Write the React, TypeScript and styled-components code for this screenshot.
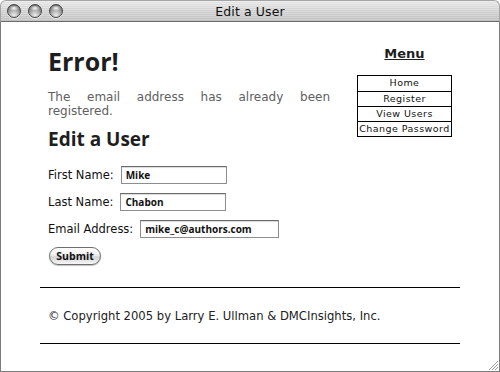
import React from 'react';
import styled, { createGlobalStyle } from 'styled-components';

const GlobalStyle = createGlobalStyle`
  html, body {
    margin: 0;
    padding: 0;
    background: #ffffff;
  }
  * {
    box-sizing: border-box;
  }
`;

const Window = styled.div`
  position: relative;
  width: 500px;
  height: 372px;
  display: flex;
  flex-direction: column;
  font-family: 'DejaVu Sans', Verdana, sans-serif;
`;

const TitleBar = styled.div`
  height: 22px;
  flex: none;
  display: grid;
  grid-template-columns: 1fr auto 1fr;
  align-items: center;
  border-radius: 6px 6px 0 0;
  border: 1px solid #a4a4a4;
  border-bottom-color: #6c6c6c;
  background:
    repeating-linear-gradient(180deg, rgba(255, 255, 255, 0.18) 0 1px, rgba(0, 0, 0, 0.03) 1px 2px),
    linear-gradient(180deg, #ececec 0%, #d6d6d6 50%, #c4c4c4 100%);
`;

const Lights = styled.div`
  display: flex;
  gap: 7px;
  padding-left: 6px;
`;

const Light = styled.span`
  width: 14px;
  height: 14px;
  border-radius: 50%;
  border: 1px solid #444;
  background:
    radial-gradient(ellipse 5px 3px at 50% 26%, rgba(255, 255, 255, 0.95) 0%, rgba(255, 255, 255, 0) 100%),
    radial-gradient(circle at 50% 85%, #eeeeee 0%, #a8a8a8 45%, #505050 100%);
  box-shadow: 0 1px 0 rgba(255, 255, 255, 0.6);
`;

const WindowTitle = styled.div`
  font-size: 12.5px;
  color: #111;
  letter-spacing: 0.1px;
`;

const Content = styled.div`
  flex: 1;
  border: 1px solid #7c7c7c;
  border-top: none;
  padding: 24px 0 0 0;
`;

const Columns = styled.div`
  display: flex;
  align-items: flex-start;
`;

const Main = styled.div`
  width: 282px;
  margin-left: 47px;
`;

const Heading = styled.h1`
  margin: 0;
  font-family: 'Open Sans', 'DejaVu Sans', sans-serif;
  font-size: 25px;
  line-height: 30px;
  font-weight: bold;
  color: #1e1e1e;
`;

const Message = styled.p`
  margin: 14px 0 0 0;
  font-size: 12px;
  line-height: 14px;
  color: #606060;
  text-align: justify;
`;

const SubHeading = styled.h2`
  margin: 10px 0 0 0;
  font-family: 'Open Sans', 'DejaVu Sans', sans-serif;
  font-size: 19px;
  line-height: 23px;
  font-weight: bold;
  color: #1e1e1e;
`;

const Form = styled.form`
  margin-top: 15px;
  display: flex;
  flex-direction: column;
  gap: 9px;
`;

const Row = styled.label`
  display: flex;
  align-items: center;
  gap: 7px;
  height: 18px;
  font-size: 11.5px;
  color: #111;
`;

const Field = styled.input<{ $w: number }>`
  width: ${({ $w }) => $w}px;
  height: 18px;
  padding: 0 4px;
  border: 1px solid #8e8e8e;
  border-top-color: #6a6a6a;
  box-shadow: inset 0 1px 1px rgba(0, 0, 0, 0.15);
  font-family: 'Open Sans', 'DejaVu Sans', sans-serif;
  font-size: 10px;
  font-weight: bold;
  line-height: 16px;
  color: #111;
  outline: none;
`;

const SubmitButton = styled.button`
  align-self: flex-start;
  margin-left: 1px;
  width: 52px;
  height: 18px;
  border-radius: 9px;
  border: 1px solid #6e6e6e;
  background: linear-gradient(180deg, #ffffff 0%, #f0f0f0 45%, #d4d4d4 55%, #f6f6f6 100%);
  box-shadow: 0 1px 1px rgba(0, 0, 0, 0.25);
  font-family: 'Open Sans', 'DejaVu Sans', sans-serif;
  font-size: 10.5px;
  font-weight: bold;
  color: #111;
  padding: 0;
`;

const Sidebar = styled.div`
  margin-left: auto;
  margin-right: 47px;
  width: 95px;
  display: flex;
  flex-direction: column;
  align-items: center;
`;

const MenuTitle = styled.div`
  font-size: 13px;
  line-height: 16px;
  font-weight: bold;
  text-decoration: underline;
  color: #1e1e1e;
`;

const MenuList = styled.ul`
  list-style: none;
  margin: 13px 0 0 0;
  padding: 0;
  width: 95px;
  border: 1px solid #000;
`;

const MenuItem = styled.li`
  height: 15px;
  line-height: 14px;
  text-align: center;
  font-size: 9.5px;
  letter-spacing: 0.45px;
  color: #111;
  white-space: nowrap;
  & + & {
    border-top: 1px solid #000;
  }
`;

const Footer = styled.div`
  margin: 22px 39px 0 39px;
  height: 57px;
  border-top: 1px solid #000;
  border-bottom: 1px solid #000;
  display: flex;
  align-items: center;
  padding-left: 8px;
  font-size: 11.6px;
  color: #222;
`;

const Grip = styled.svg`
  position: absolute;
  right: 1px;
  bottom: 1px;
`;

export default function App() {
  return (
    <>
      <GlobalStyle />
      <Window>
        <TitleBar>
          <Lights>
            <Light />
            <Light />
            <Light />
          </Lights>
          <WindowTitle>Edit a User</WindowTitle>
          <span />
        </TitleBar>
        <Content>
          <Columns>
            <Main>
              <Heading>Error!</Heading>
              <Message>The email address has already been registered.</Message>
              <SubHeading>Edit a User</SubHeading>
              <Form onSubmit={(e) => e.preventDefault()}>
                <Row>
                  First Name: <Field $w={106} defaultValue="Mike" />
                </Row>
                <Row>
                  Last Name: <Field $w={106} defaultValue="Chabon" />
                </Row>
                <Row>
                  Email Address: <Field $w={139} defaultValue="mike_c@authors.com" />
                </Row>
                <SubmitButton type="submit">Submit</SubmitButton>
              </Form>
            </Main>
            <Sidebar>
              <MenuTitle>Menu</MenuTitle>
              <MenuList>
                <MenuItem>Home</MenuItem>
                <MenuItem>Register</MenuItem>
                <MenuItem>View Users</MenuItem>
                <MenuItem>Change Password</MenuItem>
              </MenuList>
            </Sidebar>
          </Columns>
          <Footer>© Copyright 2005 by Larry E. Ullman &amp; DMCInsights, Inc.</Footer>
        </Content>
        <Grip width="11" height="11" viewBox="0 0 11 11">
          <path d="M10 1 L1 10 M10 4 L4 10 M10 7 L7 10" stroke="#9a9a9a" strokeWidth="1" />
        </Grip>
      </Window>
    </>
  );
}
